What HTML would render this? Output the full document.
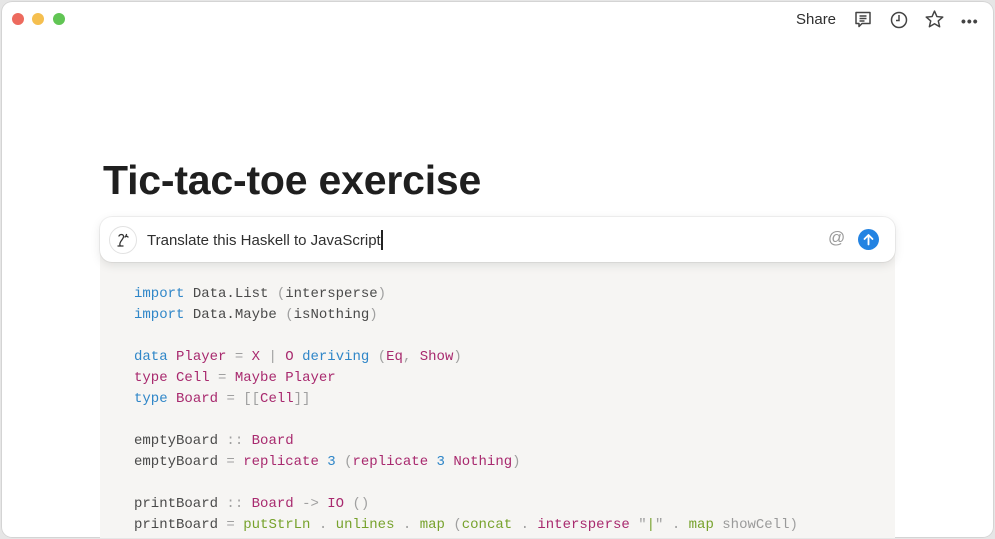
<!DOCTYPE html>
<html><head><style>
*{margin:0;padding:0;box-sizing:border-box}
body{width:995px;height:539px;background:#e6e6e6;overflow:hidden;font-family:"Liberation Sans",sans-serif}
.win{position:absolute;left:1px;top:1px;width:993px;height:537px;background:#fff;border-radius:11px;box-shadow:inset 0 0 0 1px #d4d4d4;overflow:hidden}
.dot{position:absolute;top:12px;width:12px;height:12px;border-radius:50%}
.share{position:absolute;left:795px;top:10px;font-size:15px;color:#2f2f2f}
h1{position:absolute;left:102px;top:156px;font-size:41px;font-weight:700;color:#1f1f1f;letter-spacing:-0.2px}
.code{position:absolute;left:99px;top:250px;width:795px;height:300px;background:#f6f5f3}
pre{position:absolute;left:133px;top:283px;font-family:"Liberation Mono",monospace;font-size:14px;line-height:21px;color:#4a4a4a}
.b{color:#2f86c8}.m{color:#a8296e}.g{color:#77a22c}.p{color:#a0a0a0}.s{color:#9a9a9a}
.prompt{position:absolute;left:99px;top:216px;width:795px;height:45px;background:#fff;border-radius:12px;box-shadow:0 3px 10px rgba(0,0,0,.1),0 0 0 1px rgba(0,0,0,.05)}
.ico{position:absolute;left:9px;top:9px;width:28px;height:28px;border-radius:50%;border:1px solid #e2e2e2}
.ptext{position:absolute;left:47px;top:13px;font-size:15px;color:#2f2f2f}
.cur{display:inline-block;width:2px;height:20px;background:#222;vertical-align:-5px}
.at{position:absolute;left:728px;top:11px;font-size:17px;color:#9a9a9a}
.send{position:absolute;left:758px;top:12px;width:21px;height:21px;border-radius:50%;background:#2383e2}
</style></head><body>
<div class="win">
<div class="dot" style="left:11px;background:#ed6a5e"></div>
<div class="dot" style="left:31px;background:#f5bf4f"></div>
<div class="dot" style="left:52px;background:#61c554"></div>
<div class="share">Share</div>
<svg style="position:absolute;left:852px;top:9px" width="20" height="20" viewBox="0 0 20 20" fill="none" stroke="#444" stroke-width="1.5"><path d="M3 2.5h14v11H9l-3 3v-3H3z" stroke-linejoin="round"/><path d="M6.5 6h7M6.5 8.5h7M6.5 11h5"/></svg>
<svg style="position:absolute;left:888px;top:9px" width="20" height="20" viewBox="0 0 20 20" fill="none" stroke="#444" stroke-width="1.5"><circle cx="10" cy="10" r="7.5"/><path d="M10 5v5.5H7"/></svg>
<svg style="position:absolute;left:923px;top:8px" width="21" height="21" viewBox="0 0 20 20" fill="none" stroke="#444" stroke-width="1.4" stroke-linejoin="round"><path d="M10 2l2.3 5.2 5.6.5-4.3 3.7 1.3 5.5L10 14l-4.9 2.9 1.3-5.5-4.3-3.7 5.6-.5z"/></svg>
<div style="position:absolute;left:960px;top:12px;font-size:14px;color:#444;letter-spacing:1px;font-weight:bold">•••</div>
<h1>Tic-tac-toe exercise</h1>
<div class="code"></div>
<pre><span class="b">import</span> Data.List <span class="p">(</span>intersperse<span class="p">)</span>
<span class="b">import</span> Data.Maybe <span class="p">(</span>isNothing<span class="p">)</span>

<span class="b">data</span> <span class="m">Player</span> <span class="p">=</span> <span class="m">X</span> <span class="p">|</span> <span class="m">O</span> <span class="b">deriving</span> <span class="p">(</span><span class="m">Eq</span><span class="p">,</span> <span class="m">Show</span><span class="p">)</span>
<span class="m">type</span> <span class="m">Cell</span> <span class="p">=</span> <span class="m">Maybe</span> <span class="m">Player</span>
<span class="b">type</span> <span class="m">Board</span> <span class="p">= [[</span><span class="m">Cell</span><span class="p">]]</span>

emptyBoard <span class="p">::</span> <span class="m">Board</span>
emptyBoard <span class="p">=</span> <span class="m">replicate</span> <span class="b">3</span> <span class="p">(</span><span class="m">replicate</span> <span class="b">3</span> <span class="m">Nothing</span><span class="p">)</span>

printBoard <span class="p">::</span> <span class="m">Board</span> <span class="p">-&gt;</span> <span class="m">IO</span> <span class="p">()</span>
printBoard <span class="p">=</span> <span class="g">putStrLn</span> <span class="p">.</span> <span class="g">unlines</span> <span class="p">.</span> <span class="g">map</span> <span class="p">(</span><span class="g">concat</span> <span class="p">.</span> <span class="m">intersperse</span> <span class="p">"</span><span class="g">|</span><span class="p">"</span> <span class="p">.</span> <span class="g">map</span> <span class="s">showCell</span><span class="p">)</span></pre>
<div class="prompt">
<div class="ico"><svg width="26" height="26" viewBox="0 0 26 26" fill="none" stroke="#333" stroke-width="1.3" stroke-linecap="round"><path d="M9 9c1-2 4-2 4.5 0s-2 4-3 6-1 3 0 4M8 19h5M15 10c1-1 2-1 3 0M16 8.5l.5-1"/></svg></div>
<div class="ptext">Translate this Haskell to JavaScript<span class="cur"></span></div>
<div class="at">@</div>
<div class="send"><svg width="21" height="21" viewBox="0 0 21 21" fill="none" stroke="#fff" stroke-width="1.8" stroke-linecap="round" stroke-linejoin="round"><path d="M10.5 15.5V6M6.5 10l4-4 4 4"/></svg></div>
</div>
</div>
</body></html>
